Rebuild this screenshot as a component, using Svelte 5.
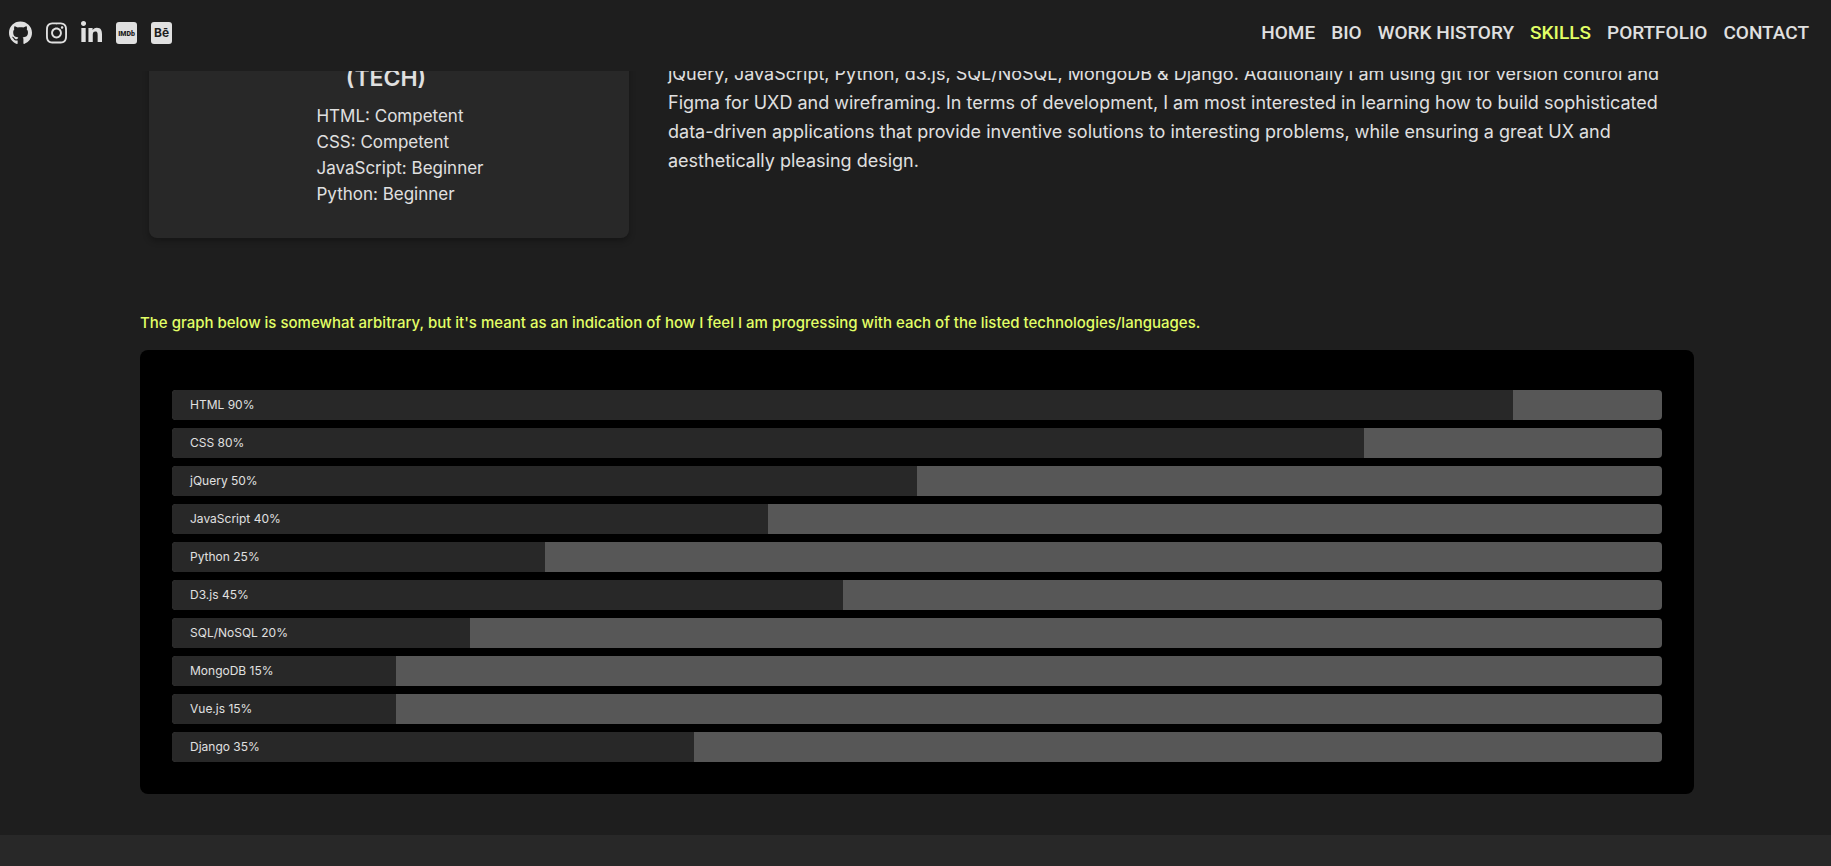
<script>
  const links = ['Home', 'Bio', 'Work History', 'Skills', 'Portfolio', 'Contact'];
  const active = 'Skills';

  const levels = [
    'HTML: Competent',
    'CSS: Competent',
    'JavaScript: Beginner',
    'Python: Beginner'
  ];

  const skills = [
    { name: 'HTML', value: 90 },
    { name: 'CSS', value: 80 },
    { name: 'jQuery', value: 50 },
    { name: 'JavaScript', value: 40 },
    { name: 'Python', value: 25 },
    { name: 'D3.js', value: 45 },
    { name: 'SQL/NoSQL', value: 20 },
    { name: 'MongoDB', value: 15 },
    { name: 'Vue.js', value: 15 },
    { name: 'Django', value: 35 }
  ];
</script>

<header>
  <div class="social">
    <a href="#github" aria-label="GitHub">
      <svg viewBox="0 0 496 512" width="23" height="24"><path d="M165.900 397.400c0 2-2.300 3.600-5.200 3.600-3.300.3-5.600-1.300-5.600-3.600 0-2 2.300-3.600 5.200-3.600 3-.3 5.600 1.300 5.600 3.600zM244.800 8C106.100 8 0 113.300 0 252c0 110.900 69.800 205.800 169.500 239.200 12.800 2.300 17.300-5.600 17.300-12.100 0-6.200-.3-40.400-.3-61.400 0 0-70 15-84.700-29.800 0 0-11.400-29.100-27.800-36.600 0 0-22.900-15.700 1.600-15.400 0 0 24.900 2 38.600 25.800 21.900 38.600 58.600 27.500 72.900 20.900 2.300-16 8.800-27.100 16-33.700-55.900-6.200-112.300-14.300-112.300-110.500 0-27.500 7.600-41.300 23.600-58.900-2.600-6.500-11.100-33.300 2.600-67.900 20.900-6.500 69 27 69 27 20-5.600 41.500-8.500 62.800-8.500s42.800 2.900 62.800 8.500c0 0 48.100-33.600 69-27 13.700 34.700 5.200 61.400 2.600 67.900 16 17.700 25.800 31.500 25.800 58.900 0 96.500-58.900 104.200-114.800 110.500 9.200 7.900 17 22.900 17 46.400 0 33.700-.3 75.400-.3 83.600 0 6.500 4.600 14.400 17.300 12.100C428.200 457.800 496 362.900 496 252 496 113.300 383.500 8 244.800 8z" /></svg>
    </a>
    <a href="#instagram" aria-label="Instagram">
      <svg viewBox="0 0 448 512" height="24"><path d="M224.100 141c-63.600 0-114.900 51.300-114.900 114.900s51.300 114.900 114.900 114.900S339 319.500 339 255.900 287.700 141 224.100 141zm0 189.600c-41.100 0-74.700-33.500-74.700-74.700s33.500-74.700 74.700-74.700 74.700 33.500 74.700 74.700-33.600 74.700-74.700 74.700zm146.400-194.300c0 14.900-12 26.800-26.800 26.800-14.900 0-26.800-12-26.800-26.800s12-26.800 26.800-26.800 26.800 12 26.800 26.800zm76.100 27.200c-1.700-35.900-9.900-67.700-36.200-93.900-26.200-26.200-58-34.400-93.900-36.200-37-2.100-147.900-2.100-184.900 0-35.800 1.700-67.600 9.900-93.900 36.100s-34.400 58-36.200 93.900c-2.100 37-2.100 147.900 0 184.900 1.700 35.900 9.900 67.700 36.200 93.900s58 34.400 93.900 36.200c37 2.100 147.900 2.100 184.900 0 35.900-1.700 67.700-9.900 93.900-36.200 26.200-26.200 34.400-58 36.200-93.900 2.100-37 2.100-147.800 0-184.800zM398.800 388c-7.800 19.600-22.900 34.700-42.600 42.600-29.500 11.700-99.500 9-132.100 9s-102.700 2.600-132.100-9c-19.600-7.800-34.700-22.900-42.600-42.600-11.700-29.500-9-99.500-9-132.100s-2.600-102.700 9-132.100c7.800-19.600 22.900-34.700 42.600-42.600 29.500-11.700 99.500-9 132.100-9s102.700-2.600 132.100 9c19.600 7.800 34.700 22.900 42.600 42.600 11.700 29.500 9 99.500 9 132.100s2.700 102.700-9 132.100z" /></svg>
    </a>
    <a href="#linkedin" aria-label="LinkedIn">
      <svg viewBox="0 0 448 512" height="24"><path d="M100.280 448H7.400V148.900h92.880zM53.790 108.100C24.090 108.100 0 83.500 0 53.800a53.790 53.790 0 0 1 107.580 0c0 29.700-24.100 54.300-53.790 54.300zM447.900 448h-92.680V302.400c0-34.700-.7-79.200-48.290-79.200-48.290 0-55.690 37.700-55.690 76.700V448h-92.780V148.900h89.080v40.800h1.300c12.400-23.500 42.690-48.300 87.880-48.300 94 0 111.280 61.900 111.280 142.300V448z" /></svg>
    </a>
    <a href="#imdb" aria-label="IMDb">
      <svg viewBox="0 0 21 24" height="24"><rect y="1" width="21" height="22" rx="3" /><text class="imdb" x="10.500" y="15" font-size="7">IMDb</text></svg>
    </a>
    <a href="#behance" aria-label="Behance">
      <svg viewBox="0 0 21 24" height="24"><rect y="1" width="21" height="22" rx="3" /><text x="10.500" y="16" font-size="12">Bē</text></svg>
    </a>
  </div>
  <nav>
    {#each links as link}
      <a href="#{link.toLowerCase().replace(' ', '-')}" class:active={link === active}>{link}</a>
    {/each}
  </nav>
</header>

<main>
  <section class="intro">
    <article class="card">
      <h2>(TECH)</h2>
      <ul>
        {#each levels as level}
          <li>{level}</li>
        {/each}
      </ul>
    </article>
    <p class="about">
      jQuery, JavaScript, Python, d3.js, SQL/NoSQL, MongoDB &amp; Django. Additionally I am using git for version control and<br />
      Figma for UXD and wireframing. In terms of development, I am most interested in learning how to build sophisticated<br />
      data-driven applications that provide inventive solutions to interesting problems, while ensuring a great UX and<br />
      aesthetically pleasing design.
    </p>
  </section>

  <p class="note">
    The graph below is somewhat arbitrary, but it's meant as an indication of how I feel I am progressing with each of the listed technologies/languages.
  </p>

  <section class="chart" aria-label="Skill levels">
    {#each skills as skill}
      <div class="track">
        <div class="fill" style="width: {skill.value}%">{skill.name} {skill.value}%</div>
      </div>
    {/each}
  </section>
</main>
<footer></footer>

<style>
  :global(body) {
    background: #1e1e1e;
    color: #e0e0e0;
    font-family: Inter, 'Liberation Sans', sans-serif;
    overflow: hidden;
  }

  header {
    position: sticky;
    top: 0;
    z-index: 2;
    box-sizing: border-box;
    height: 71px;
    padding: 0 22px 5px 9px;
    display: flex;
    align-items: center;
    justify-content: space-between;
    background: #1e1e1e;
  }

  .social {
    display: flex;
    gap: 14px;
  }

  .social a {
    display: flex;
  }

  .social svg {
    display: block;
    fill: #e0e0e0;
  }

  .social text {
    fill: #1e1e1e;
    font-family: Inter, sans-serif;
    font-weight: 700;
    text-anchor: middle;
  }

  .social .imdb {
    font-family: Roboto, sans-serif;
    font-weight: 900;
  }

  nav {
    display: flex;
    gap: 16px;
    font: 500 19px/24px Roboto, sans-serif;
    text-transform: uppercase;
  }

  nav a {
    color: #e0e0e0;
    text-decoration: none;
  }

  nav a.active {
    color: #e2ff66;
  }

  main {
    padding: 0 137px 41px 140px;
  }

  .intro {
    display: flex;
    gap: 39px;
    margin-top: -12px;
    padding-left: 9px;
  }

  .card {
    box-sizing: border-box;
    flex: 0 0 480px;
    height: 179px;
    display: flex;
    flex-direction: column;
    align-items: center;
    border-radius: 8px;
    background: #282828;
    box-shadow: 0 3px 6px rgba(0, 0, 0, 0.3);
  }

  h2 {
    margin: 0 0 6px;
    padding-right: 6px;
    font-size: 23px;
    line-height: 38px;
    font-weight: 600;
  }

  ul {
    margin: 0;
    padding: 0 0 0 22px;
    list-style: none;
    font-size: 17px;
    line-height: 26px;
  }

  .about {
    margin: 0;
    font-size: 18px;
    line-height: 29px;
    white-space: nowrap;
  }

  .note {
    margin: 73px 0 15px;
    color: #e2ff66;
    font-size: 15px;
    font-weight: 500;
    line-height: 24px;
  }

  .chart {
    display: flex;
    flex-direction: column;
    gap: 8px;
    padding: 40px 32px 32px;
    border-radius: 8px;
    background: #000;
  }

  .track {
    border-radius: 4px;
    overflow: hidden;
    background: #575757;
  }

  .fill {
    box-sizing: border-box;
    padding-left: 18px;
    background: #282828;
    font-size: 12px;
    line-height: 30px;
    white-space: nowrap;
  }

  footer {
    height: 31px;
    background: #282828;
  }
</style>
